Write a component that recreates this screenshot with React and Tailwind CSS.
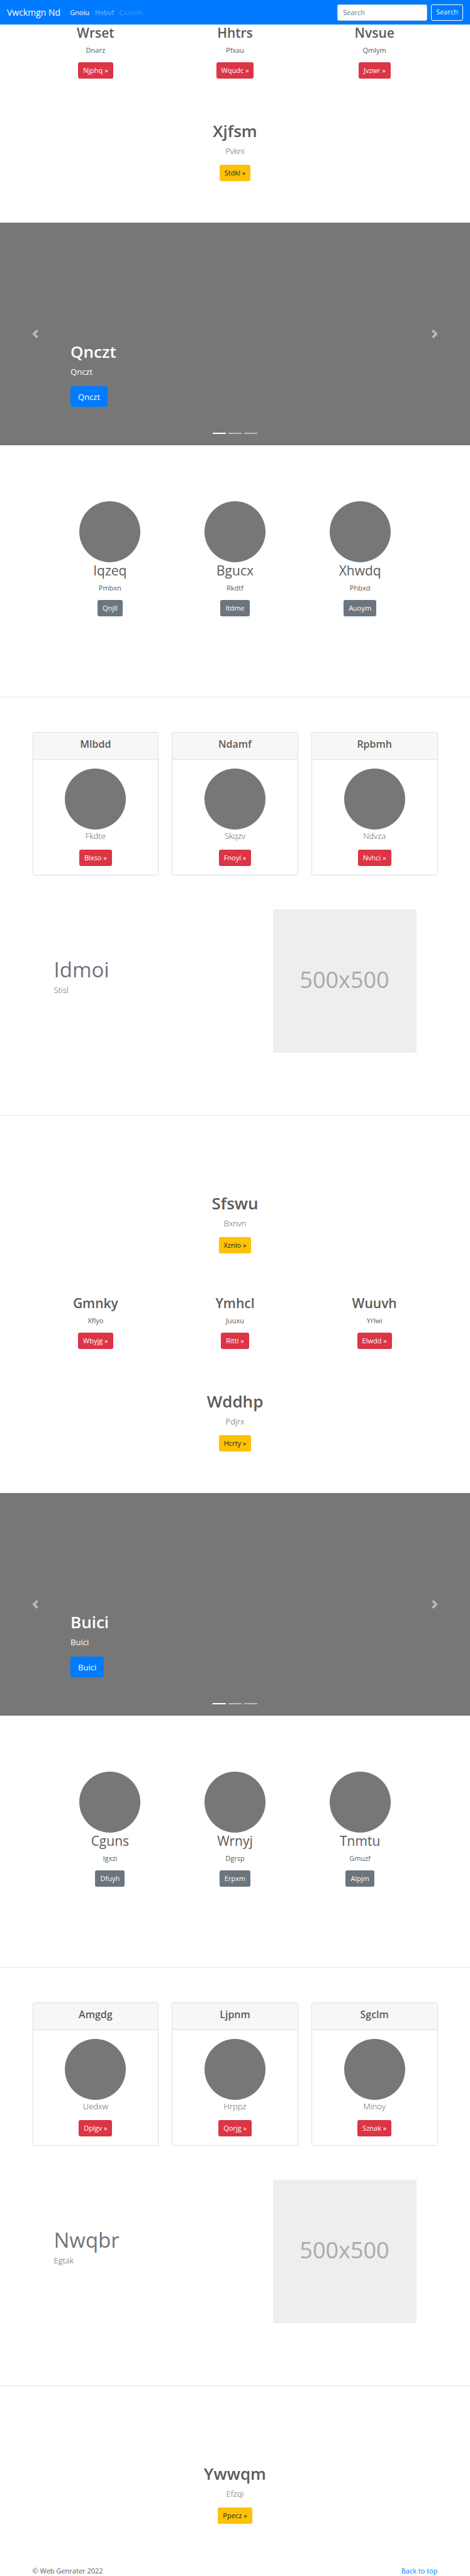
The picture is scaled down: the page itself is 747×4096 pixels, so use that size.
import React from "react";

const blocks = [
  {
    columns: [
      { title: "Wrset", text: "Dnarz", action: "Njphq »" },
      { title: "Hhtrs", text: "Pfxau", action: "Wqudc »" },
      { title: "Nvsue", text: "Qmlym", action: "Jvzwr »" },
    ],
    intro: { title: "Xjfsm", text: "Pvkni", action: "Stdkl »" },
    slide: "Qnczt",
    people: [
      { title: "Iqzeq", text: "Pmbxn", action: "Qnjll" },
      { title: "Bgucx", text: "Rkdtf", action: "Itdme" },
      { title: "Xhwdq", text: "Phbxd", action: "Auoym" },
    ],
    cards: [
      { title: "Mlbdd", text: "Fkdte", action: "Blxso »" },
      { title: "Ndamf", text: "Skqzv", action: "Fnoyl »" },
      { title: "Rpbmh", text: "Ndvza", action: "Nvhci »" },
    ],
    feature: { title: "Idmoi", text: "Stisl" },
    outro: { title: "Sfswu", text: "Bxnvn", action: "Xznlo »" },
  },
  {
    columns: [
      { title: "Gmnky", text: "Xflyo", action: "Wbyjg »" },
      { title: "Ymhcl", text: "Juuxu", action: "Ritti »" },
      { title: "Wuuvh", text: "Yrlwi", action: "Elwdd »" },
    ],
    intro: { title: "Wddhp", text: "Pdjrx", action: "Hcrty »" },
    slide: "Buici",
    people: [
      { title: "Cguns", text: "Igxzi", action: "Dfuyh" },
      { title: "Wrnyj", text: "Dgrsp", action: "Erpxm" },
      { title: "Tnmtu", text: "Gmuzf", action: "Alpjm" },
    ],
    cards: [
      { title: "Amgdg", text: "Uedxw", action: "Dplgv »" },
      { title: "Ljpnm", text: "Hrppz", action: "Qorjg »" },
      { title: "Sgclm", text: "Minoy", action: "Sznak »" },
    ],
    feature: { title: "Nwqbr", text: "Egtak" },
    outro: { title: "Ywwqm", text: "Efzqi", action: "Ppecz »" },
  },
];

const tones = {
  danger: "bg-[#dc3545] text-white",
  warning: "bg-[#ffc107] text-[#212529]",
  secondary: "bg-[#6c757d] text-white",
};

function Action({ tone, children }) {
  return (
    <a
      href="#"
      className={`inline-flex h-[26px] items-center rounded-[3px] px-2 text-[11px] leading-4 ${tones[tone]}`}
    >
      {children}
    </a>
  );
}

function Container({ children }) {
  return <div className="mx-auto w-full max-w-[664px] px-2.5">{children}</div>;
}

function Navbar() {
  return (
    <nav className="flex h-[39px] items-center bg-[#007bff] px-[11px]">
      <a href="#" className="mr-[15px] text-sm leading-5 text-white">
        Vwckmgn Nd
      </a>
      <ul className="flex flex-1 gap-[9px] text-[11px] leading-4">
        <li>
          <a href="#" className="text-white">Gnoiu</a>
        </li>
        <li>
          <a href="#" className="text-white/50">Hxbvf</a>
        </li>
        <li>
          <a href="#" aria-disabled="true" className="text-white/25">Cxmoh</a>
        </li>
      </ul>
      <form className="flex gap-1.5">
        <input
          type="text"
          aria-label="Search"
          placeholder="Search"
          className="h-[26px] w-[143px] rounded-[3px] border border-[#ced4da] bg-white px-2 text-[11px] text-[#495057] placeholder:text-[#6c757d]"
        />
        <button
          type="button"
          className="h-[26px] rounded-[3px] border border-[#f8f9fa] px-[7px] text-[11px] text-[#f8f9fa]"
        >
          Search
        </button>
      </form>
    </nav>
  );
}

function Columns({ items }) {
  return (
    <Container>
      <div className="grid grid-cols-3 gap-[21px]">
        {items.map((item) => (
          <div key={item.title} className="flex flex-col items-center">
            <h2 className="mb-[5px] text-[21px] leading-[27px] font-semibold">{item.title}</h2>
            <p className="mb-[11px] text-[11px] leading-[17px]">{item.text}</p>
            <Action tone="danger">{item.action}</Action>
          </div>
        ))}
      </div>
    </Container>
  );
}

function Hero({ item }) {
  return (
    <div className="flex flex-col items-center">
      <h1 className="mb-[5px] text-[26px] leading-[33px] font-semibold">{item.title}</h1>
      <p className="mb-[11px] text-[13px] leading-[21px] font-light">{item.text}</p>
      <Action tone="warning">{item.action}</Action>
    </div>
  );
}

function Chevron({ d }) {
  return (
    <svg viewBox="0 0 8 8" className="size-3.5" fill="#fff" aria-hidden="true">
      <path d={d} />
    </svg>
  );
}

function Carousel({ label }) {
  return (
    <section className="relative flex h-[354px] items-end bg-[#777] px-[15%] pb-[61px] text-white">
      <button
        type="button"
        aria-label="Previous"
        className="absolute inset-y-0 left-0 flex w-[15%] items-center justify-center opacity-50"
      >
        <Chevron d="M5.25 0l-4 4 4 4 1.5-1.5L4.25 4l2.5-2.5L5.25 0z" />
      </button>
      <div>
        <h1 className="mb-[5px] text-[26px] leading-[33px] font-semibold">{label}</h1>
        <p className="mb-3 text-[13px] leading-[21px]">{label}</p>
        <a
          href="#"
          className="inline-flex h-[33px] items-center rounded bg-[#007bff] px-3 text-[13px] leading-5"
        >
          {label}
        </a>
      </div>
      <button
        type="button"
        aria-label="Next"
        className="absolute inset-y-0 right-0 flex w-[15%] items-center justify-center opacity-50"
      >
        <Chevron d="M2.75 0l-1.5 1.5L3.75 4l-2.5 2.5L2.75 8l4-4-4-4z" />
      </button>
      <div className="absolute inset-x-0 bottom-[18px] flex justify-center gap-1">
        <span className="h-0.5 w-[21px] bg-white" />
        <span className="h-0.5 w-[21px] bg-white/50" />
        <span className="h-0.5 w-[21px] bg-white/50" />
      </div>
    </section>
  );
}

function People({ items }) {
  return (
    <div className="mx-auto grid w-full max-w-[596px] grid-cols-3">
      {items.map((item) => (
        <div key={item.title} className="flex flex-col items-center">
          <div className="size-[97px] rounded-full bg-[#777]" />
          <h2 className="mb-[5px] text-[21px] leading-[27px]">{item.title}</h2>
          <p className="mb-[11px] text-[11px] leading-[17px]">{item.text}</p>
          <Action tone="secondary">{item.action}</Action>
        </div>
      ))}
    </div>
  );
}

function Cards({ items }) {
  return (
    <Container>
      <div className="grid grid-cols-3 gap-[21px]">
        {items.map((item) => (
          <div key={item.title} className="overflow-hidden rounded-[3px] border border-[#dfdfdf]">
            <div className="border-b border-[#dfdfdf] bg-[#f7f7f7] pt-2 pb-3.5 text-center">
              <h4 className="text-base leading-5 font-semibold">{item.title}</h4>
            </div>
            <div className="flex flex-col items-center py-3.5">
              <div className="size-[97px] rounded-full bg-[#777]" />
              <p className="mb-[11px] text-[13px] leading-[21px] font-light">{item.text}</p>
              <Action tone="danger">{item.action}</Action>
            </div>
          </div>
        ))}
      </div>
    </Container>
  );
}

function Feature({ item }) {
  return (
    <Container>
      <div className="flex justify-between px-[34px]">
        <div className="pt-[78px]">
          <h2 className="mb-[5px] text-[33px] leading-[35px] text-[#6c757d]">{item.title}</h2>
          <p className="text-[13px] leading-[21px] font-light">{item.text}</p>
        </div>
        <div className="flex size-[228px] items-center justify-center bg-[#eee] pb-1 text-[36px] leading-10 text-[#aaa]">
          500x500
        </div>
      </div>
    </Container>
  );
}

function Block({ data }) {
  return (
    <>
      <Columns items={data.columns} />
      <div className="pt-[67px] pb-[66px]">
        <Hero item={data.intro} />
      </div>
      <Carousel label={data.slide} />
      <div className="pt-[89px] pb-32">
        <People items={data.people} />
      </div>
      <hr className="border-[#e5e5e5]" />
      <div className="pt-[55px] pb-[54px]">
        <Cards items={data.cards} />
      </div>
      <Feature item={data.feature} />
      <hr className="mt-[99px] border-[#e5e5e5]" />
      <div className="pt-[123px] pb-[66px]">
        <Hero item={data.outro} />
      </div>
    </>
  );
}

export default function App() {
  return (
    <div className="bg-white font-['Open_Sans',sans-serif] text-[#5a5a5a]">
      <Navbar />
      <main>
        {blocks.map((data) => (
          <Block key={data.slide} data={data} />
        ))}
      </main>
      <footer>
        <Container>
          <div className="flex justify-between text-[11px] leading-[17px]">
            <p>© Web Genrater 2022</p>
            <a href="#" className="text-[#007bff]">Back to top</a>
          </div>
        </Container>
      </footer>
    </div>
  );
}
